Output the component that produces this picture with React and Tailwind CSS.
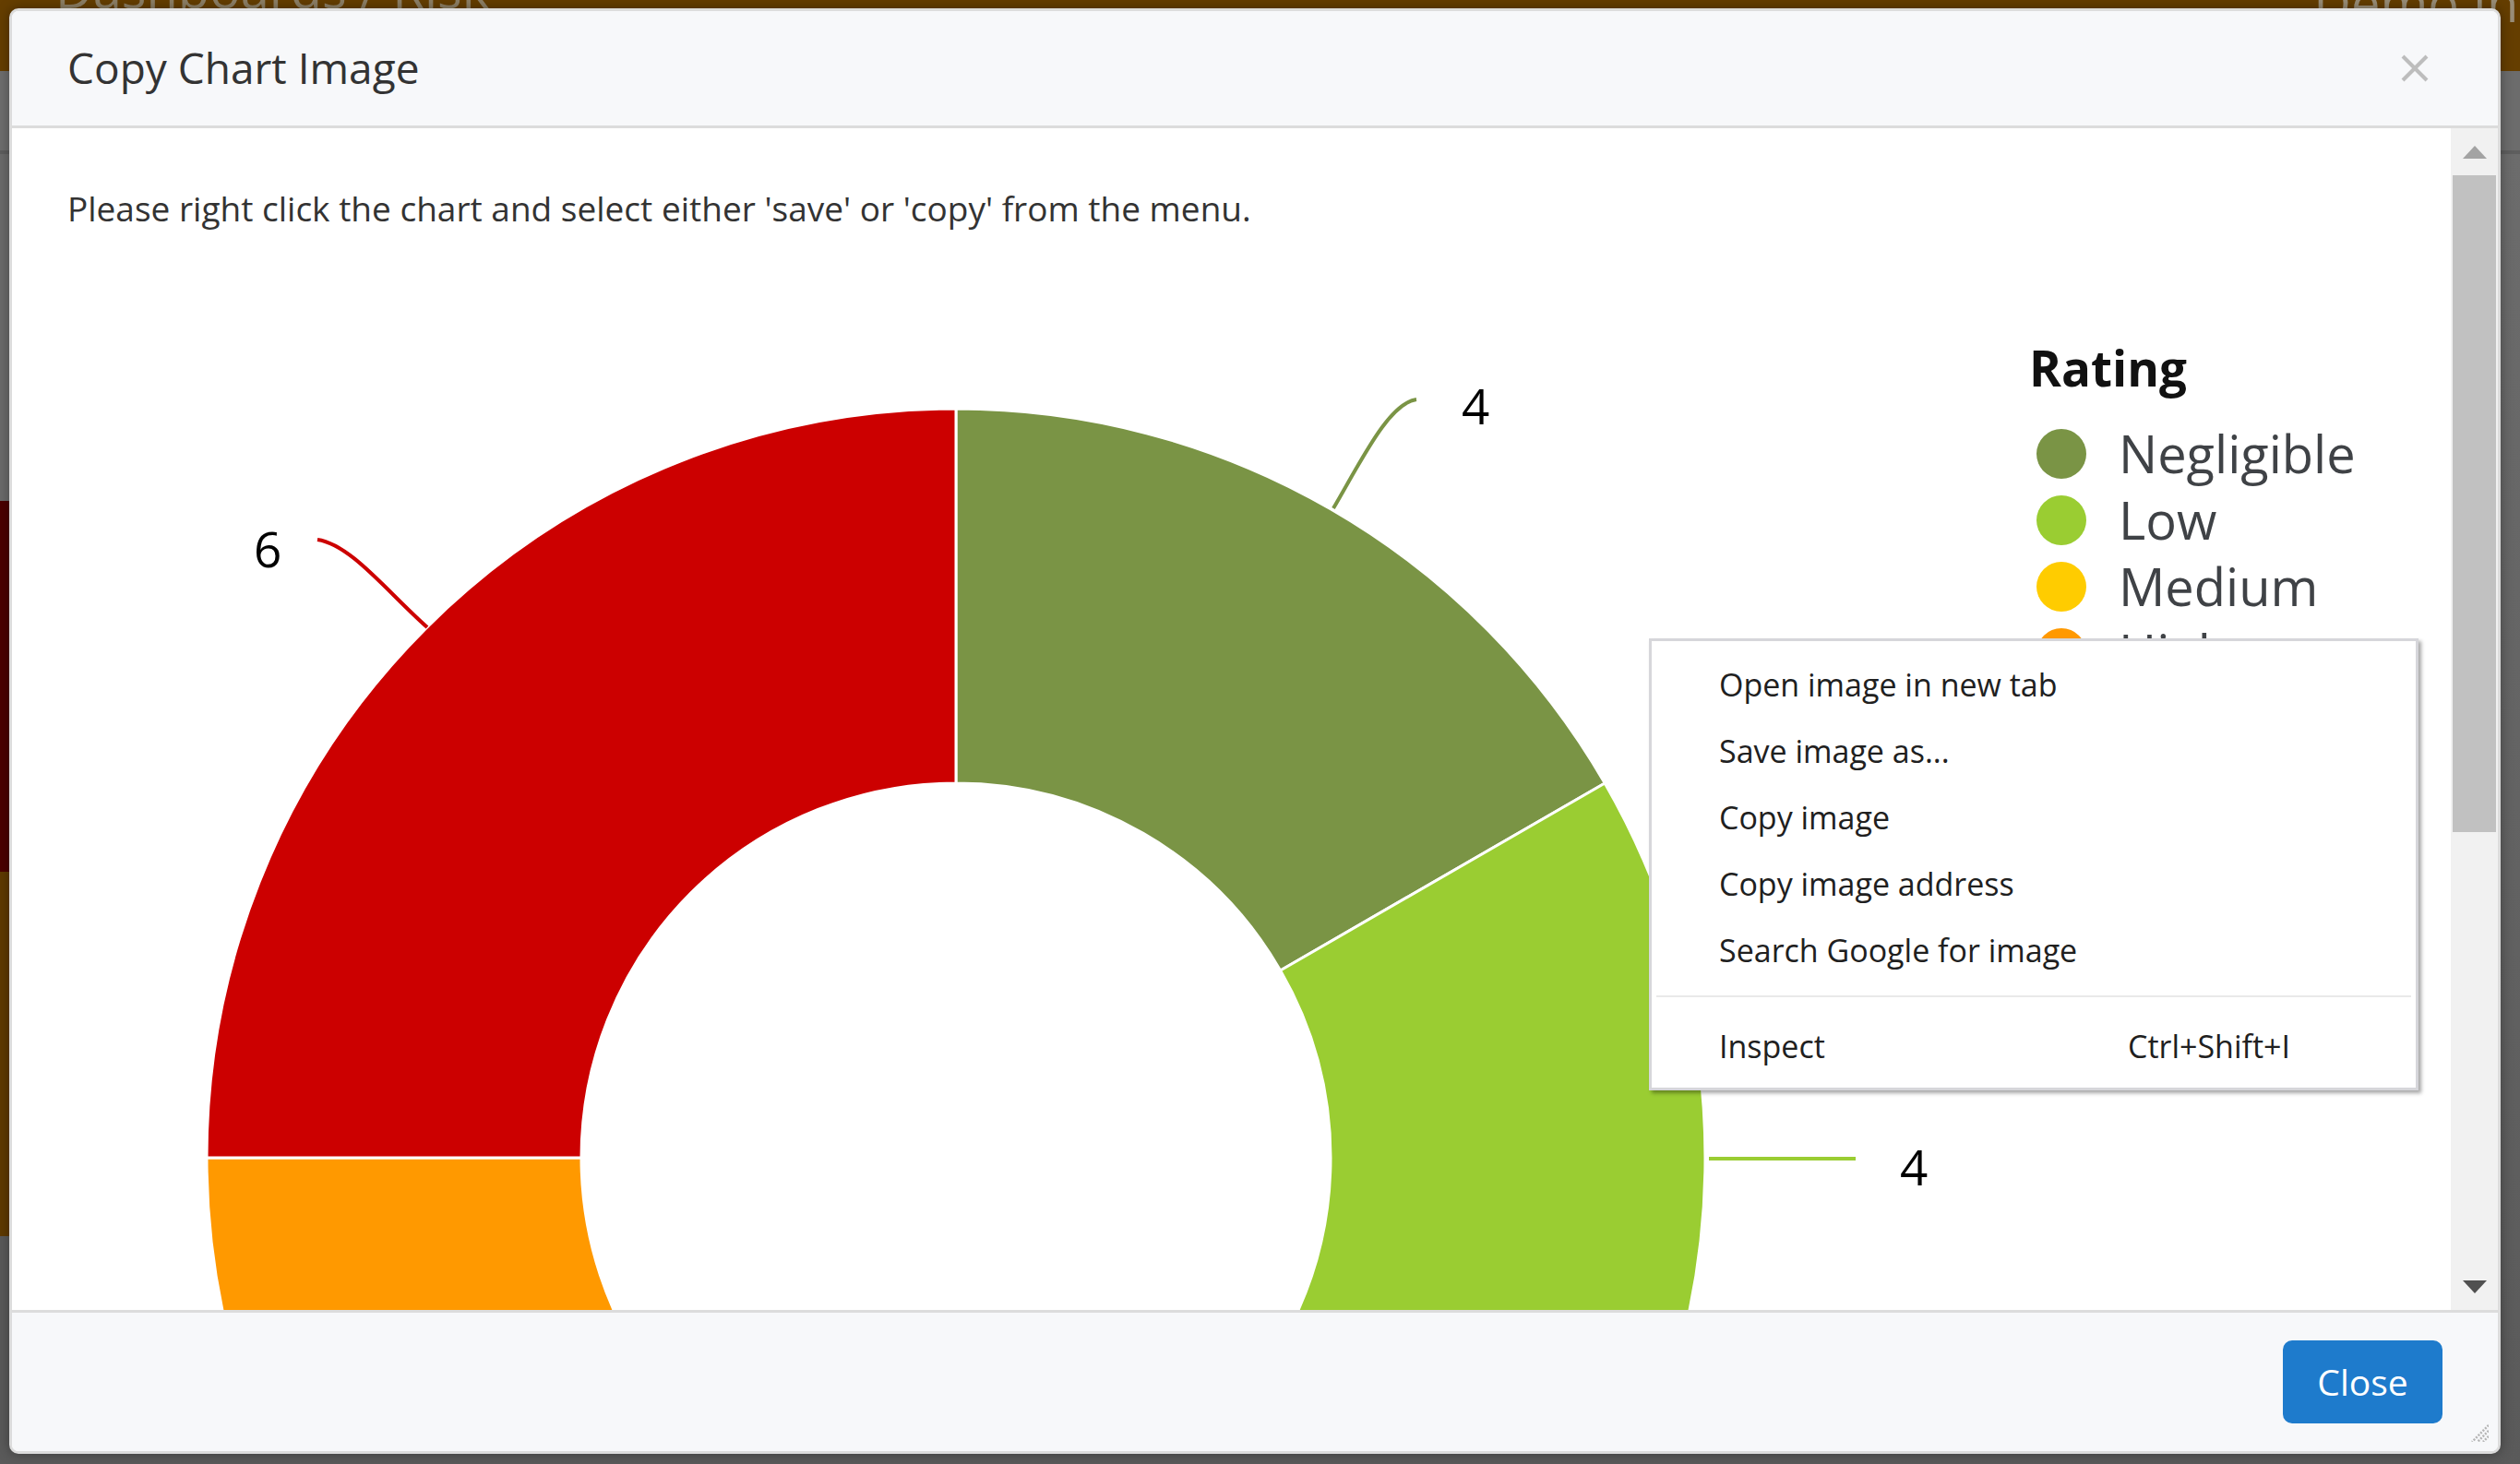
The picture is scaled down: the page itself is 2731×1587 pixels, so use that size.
import React from "react";

const CX = 1036;
const CY = 1255;
const R = 812;
const RI = 406;

function pt(a, rad) {
  const t = (a * Math.PI) / 180;
  return [CX + rad * Math.sin(t), CY - rad * Math.cos(t)];
}

function seg(a0, a1) {
  const large = a1 - a0 > 180 ? 1 : 0;
  const [x0, y0] = pt(a0, R);
  const [x1, y1] = pt(a1, R);
  const [x2, y2] = pt(a1, RI);
  const [x3, y3] = pt(a0, RI);
  return `M${x0} ${y0} A${R} ${R} 0 ${large} 1 ${x1} ${y1} L${x2} ${y2} A${RI} ${RI} 0 ${large} 0 ${x3} ${y3} Z`;
}

const slices = [
  { a0: 0, a1: 60, c: "#7a9445" },
  { a0: 60, a1: 120, c: "#9acd32" },
  { a0: 120, a1: 195, c: "#ffcc00" },
  { a0: 195, a1: 270, c: "#ff9900" },
  { a0: 270, a1: 360, c: "#cc0000" },
];

const legend = [
  { name: "Negligible", c: "#7a9445" },
  { name: "Low", c: "#9acd32" },
  { name: "Medium", c: "#ffcc00" },
  { name: "High", c: "#ff9900" },
  { name: "Very High", c: "#cc0000" },
];

const FONT = "'Open Sans', 'Noto Sans', sans-serif";

function Chart() {
  return (
    <svg
      className="block"
      width="2643"
      height="1140"
      viewBox="13 280 2643 1140"
      style={{ fontFamily: FONT }}
    >
      {slices.map((s, i) => (
        <path key={i} d={seg(s.a0, s.a1)} fill={s.c} stroke="#ffffff" strokeWidth="3" strokeLinejoin="round" />
      ))}
      <path d="M463 680 C420 642 380 590 344 585" fill="none" stroke="#cc0000" strokeWidth="4" />
      <path d="M1445 551 C1475 500 1505 437 1535 433" fill="none" stroke="#7a9445" strokeWidth="4" />
      <path d="M1852 1256 L2011 1256" fill="none" stroke="#9acd32" strokeWidth="4" />
      <text x="275" y="615" fontSize="53" fill="#000">6</text>
      <text x="1584" y="460" fontSize="53" fill="#000">4</text>
      <text x="2059" y="1285" fontSize="53" fill="#000">4</text>
      <text x="2199" y="419" fontSize="53" fontWeight="700" fill="#111">Rating</text>
      {legend.map((l, i) => (
        <g key={l.name}>
          <circle cx="2234" cy={492 + i * 72} r="27" fill={l.c} />
          <text x="2296" y={513 + i * 72} fontSize="56" fill="#3f4246">
            {l.name}
          </text>
        </g>
      ))}
    </svg>
  );
}

function Scrollbar() {
  return (
    <div className="flex w-[51px] flex-col bg-[#f1f1f1]">
      <div className="flex h-[51px] items-center justify-center">
        <svg width="26" height="14" viewBox="0 0 26 14">
          <polygon points="0,14 26,14 13,0" fill="#a3a3a3" />
        </svg>
      </div>
      <div className="mx-[2px] h-[712px] bg-[#c1c1c1]" />
      <div className="flex-1" />
      <div className="flex h-[51px] items-center justify-center">
        <svg width="26" height="14" viewBox="0 0 26 14">
          <polygon points="0,0 26,0 13,14" fill="#505050" />
        </svg>
      </div>
    </div>
  );
}

function ContextMenu() {
  const items = [
    "Open image in new tab",
    "Save image as...",
    "Copy image",
    "Copy image address",
    "Search Google for image",
  ];
  return (
    <div
      className="absolute left-[1787px] top-[692px] flex h-[490px] w-[834px] flex-col border-[3px] border-[#d6d6da] bg-white pt-[11px] text-[34px] text-[#202020] shadow-[3px_3px_4px_rgba(0,0,0,0.35)]"
      style={{ fontFamily: FONT }}
    >
      {items.map((t) => (
        <div key={t} className="flex h-[72px] items-center pl-[73px]">
          {t}
        </div>
      ))}
      <div className="h-[32px] pt-[13px]">
        <div className="mx-[5px] h-[2px] bg-[#e9e9e9]" />
      </div>
      <div className="flex h-[72px] items-center pl-[73px]">
        <span className="w-[443px]">Inspect</span>
        <span>Ctrl+Shift+I</span>
      </div>
    </div>
  );
}

export default function App() {
  return (
    <div
      className="relative h-[1587px] w-[2731px] overflow-hidden bg-[#585858]"
      style={{ fontFamily: FONT }}
    >
      {/* dimmed page behind */}
      <div className="flex h-full flex-col">
        <div className="flex h-[77px] items-start justify-between overflow-hidden bg-[#653e00] pl-[60px]">
          <span className="-mt-[41px] text-[56px] leading-[56px] text-[#8e8066]">Dashboards / Risk</span>
          <span className="-mr-[40px] -mt-[26px] text-[56px] leading-[56px] text-[#9a8e78]">Demo Inc.</span>
        </div>
        <div className="flex flex-1">
          <div className="flex w-[40px] flex-col">
            <div className="h-[90px] border-b-[4px] border-[#5e5e5e] bg-[#6e6e6e]" />
            <div className="h-[376px] bg-[#6b6b6b]" />
            <div className="h-[402px] bg-[#4b0000]" />
            <div className="h-[395px] bg-[#5f3a00]" />
            <div className="flex-1 bg-[#5a5a5a]" />
          </div>
          <div className="flex flex-1 flex-col bg-[#6c6c6c]">
            <div className="h-[90px] border-b-[4px] border-[#5e5e5e]" />
            <div className="flex-1 bg-gradient-to-b from-[#6c6c6c] to-[#5a5a5a]" />
          </div>
        </div>
      </div>

      {/* modal */}
      <div className="absolute left-[10px] top-[9px] flex h-[1567px] w-[2700px] flex-col overflow-hidden rounded-[10px] border-[3px] border-[#dcdcdc] bg-white shadow-[0_0_14px_rgba(0,0,0,0.35)]">
        <div className="flex h-[127px] items-center justify-between border-b-[3px] border-[#dcdcdc] bg-[#f7f8fa] pl-[60px] pr-[75px]">
          <div className="text-[46px] leading-[1.2] text-[#333333]">Copy Chart Image</div>
          <svg width="30" height="30" viewBox="0 0 30 30">
            <line x1="2" y1="2" x2="28" y2="28" stroke="#bdbdbd" strokeWidth="4" />
            <line x1="28" y1="2" x2="2" y2="28" stroke="#bdbdbd" strokeWidth="4" />
          </svg>
        </div>
        <div className="flex h-[1281px]">
          <div className="flex-1 overflow-hidden bg-white">
            <p className="pl-[60px] pt-[59px] text-[37px] leading-[56px] text-[#333333]">
              Please right click the chart and select either 'save' or 'copy' from the menu.
            </p>
            <div className="mt-[26px]">
              <Chart />
            </div>
          </div>
          <Scrollbar />
        </div>
        <div className="relative flex flex-1 items-center justify-end border-t-[3px] border-[#dcdcdc] bg-[#f7f8fa] pr-[60px]">
          <button className="flex h-[90px] w-[173px] items-center justify-center rounded-[10px] bg-[#1e7bcc] text-[39px] text-white">
            Close
          </button>
          <svg className="absolute bottom-[10px] right-[10px]" width="21" height="21" viewBox="0 0 21 21">
            <path d="M21 3 L3 21 M21 9 L9 21 M21 15 L15 21" stroke="#b5b5b5" strokeWidth="2.5" strokeDasharray="2 1.5" />
          </svg>
        </div>
      </div>

      <ContextMenu />
    </div>
  );
}
